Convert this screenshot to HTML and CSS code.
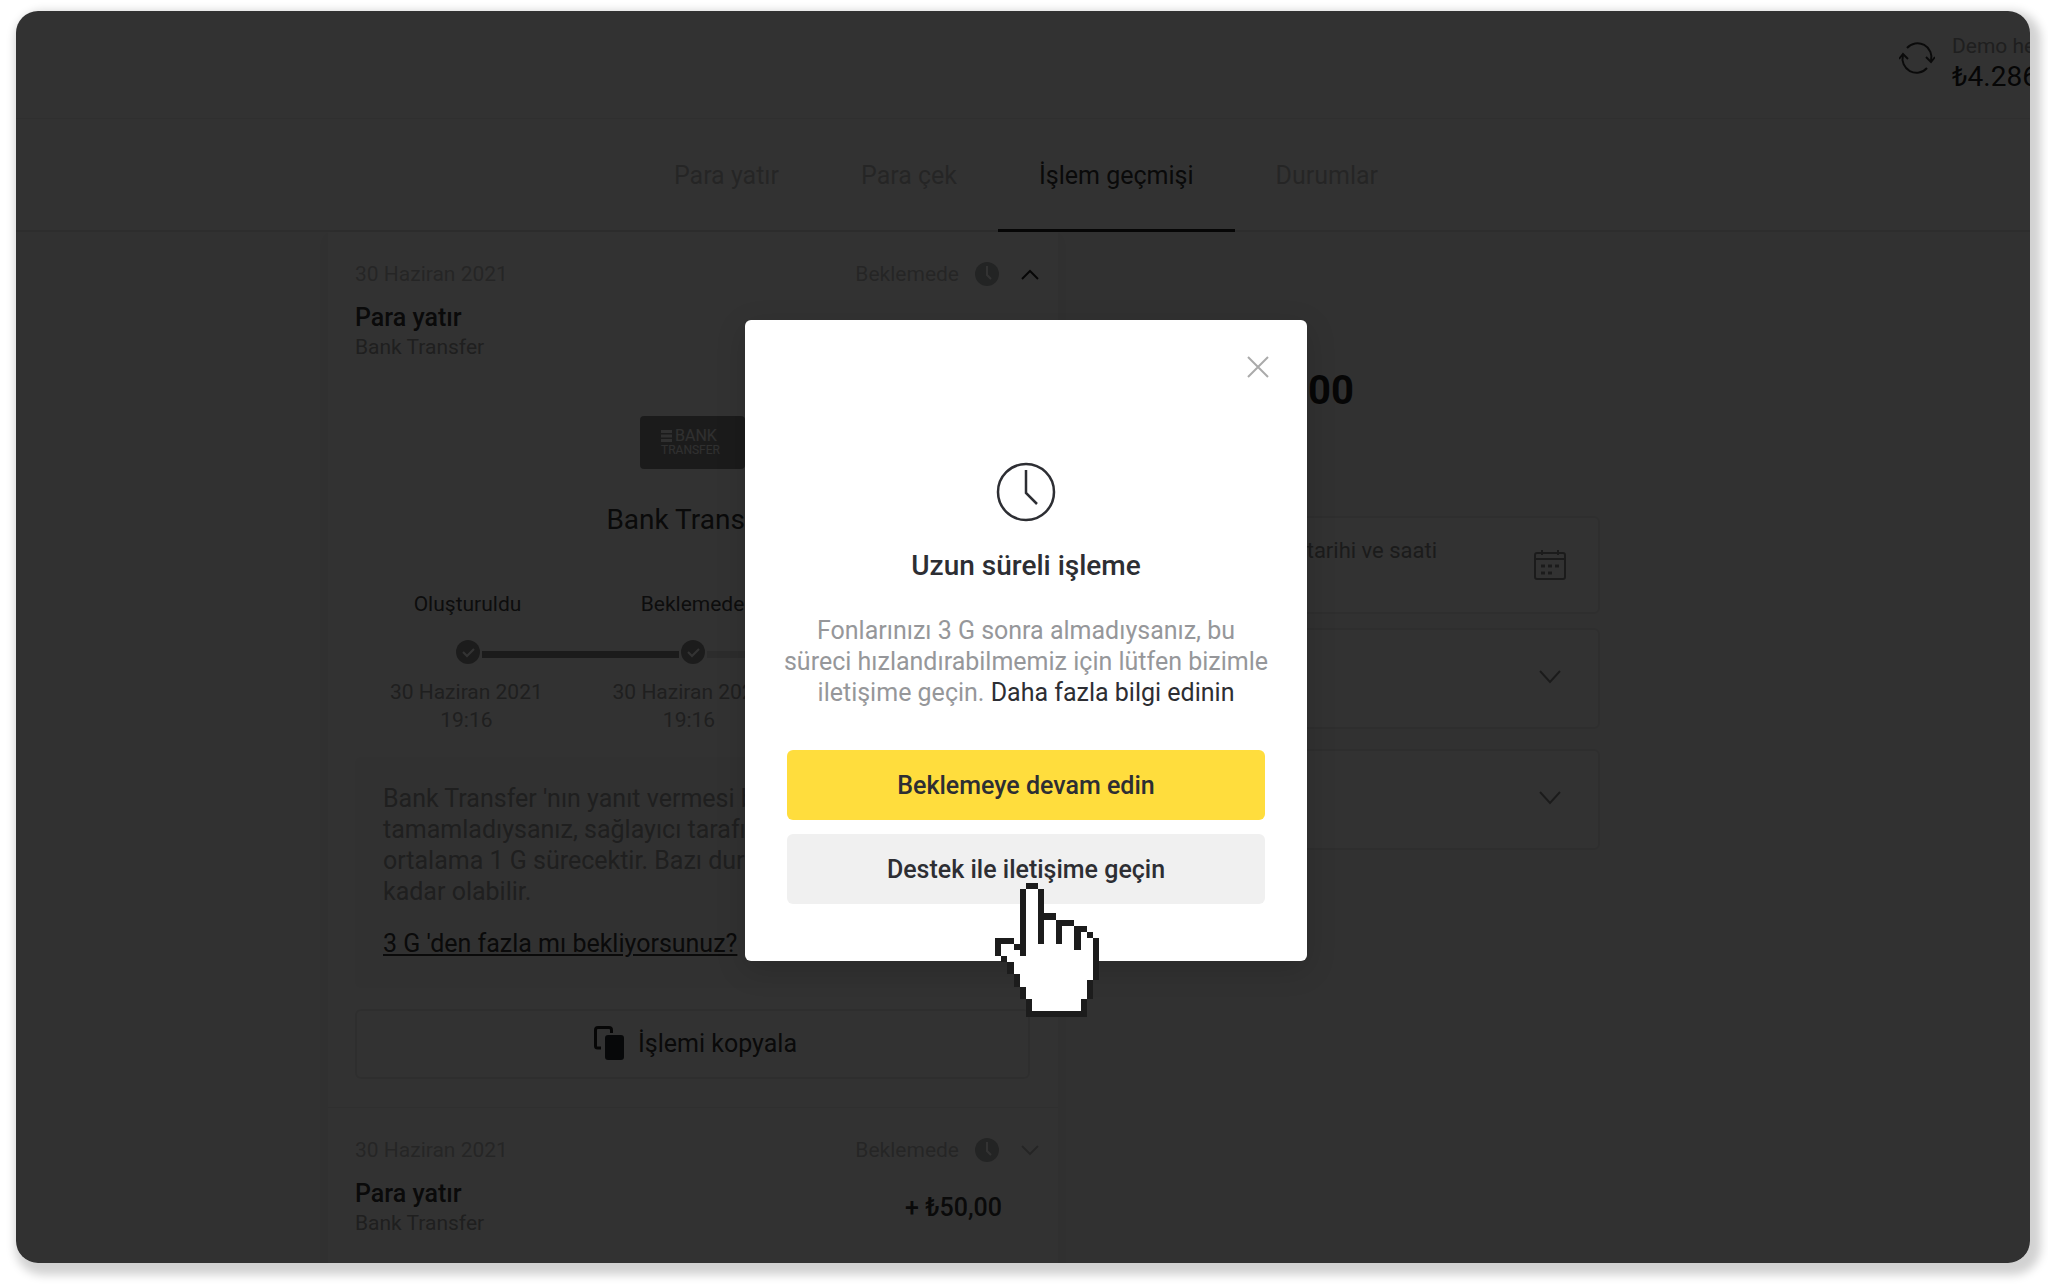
FILE: index.html
```html
<!DOCTYPE html>
<html lang="tr">
<head>
  <meta charset="UTF-8">
  <meta name="viewport" content="width=device-width, initial-scale=1.0">
  <title>İşlem geçmişi</title>
  <link rel="stylesheet" href="styles.css">
</head>
<body>
  <div class="frame">
    <div class="page">
      <header class="header">
        <svg class="refresh" viewBox="0 0 36 36" fill="none" stroke="currentColor" stroke-width="2">
          <path d="M8 8a14 14 0 0 1 24 13M28 28A14 14 0 0 1 4 15"/>
          <path d="M27 17l5 5 4-5M0 19l4-5 5 5"/>
        </svg>
        <div class="account">
          <div class="account-name">Demo hesap</div>
          <div class="account-balance">₺4.286,00</div>
        </div>
      </header>

      <nav class="tabs">
        <a href="#" class="tab">Para yatır</a>
        <a href="#" class="tab">Para çek</a>
        <a href="#" class="tab active">İşlem geçmişi</a>
        <a href="#" class="tab">Durumlar</a>
      </nav>

      <main class="content">
        <section class="history">
          <article class="item">
            <div class="item-top">
              <span class="date">30 Haziran 2021</span>
              <span class="status">Beklemede</span>
              <svg class="status-icon" viewBox="0 0 24 24">
                <circle cx="12" cy="12" r="12" fill="#aeb2b2"/>
                <path d="M12 4v9l4 4" fill="none" stroke="#fff" stroke-width="2"/>
              </svg>
              <svg class="chevron dark" viewBox="0 0 18 24" fill="none" stroke="currentColor" stroke-width="2">
                <path d="M1 17l8-8 8 8"/>
              </svg>
            </div>
            <div class="item-main">
              <div>
                <h3>Para yatır</h3>
                <p class="method">Bank Transfer</p>
              </div>
            </div>

            <div class="details">
              <div class="bank-logo">
                <div class="bank-row">
                  <svg class="bars" viewBox="0 0 12 12" fill="currentColor">
                    <path d="M0 0h11v3H0zM0 4.500h11v3H0zM0 9h11v3H0z"/>
                  </svg>
                  <span class="bank-word">BANK</span>
                </div>
                <span class="transfer-word">TRANSFER</span>
              </div>
              <h2>Bank Transfer</h2>

              <div class="steps step-names">
                <span>Oluşturuldu</span>
                <span>Beklemede</span>
                <span>Tamamlandı</span>
              </div>
              <div class="track">
                <svg class="dot" viewBox="0 0 24 24">
                  <circle cx="12" cy="12" r="12" fill="#8c8c8c"/>
                  <path d="M7 12l4 4 7-7" fill="none" stroke="#fff" stroke-width="2"/>
                </svg>
                <span class="line"></span>
                <svg class="dot" viewBox="0 0 24 24">
                  <circle cx="12" cy="12" r="12" fill="#8c8c8c"/>
                  <path d="M7 12l4 4 7-7" fill="none" stroke="#fff" stroke-width="2"/>
                </svg>
                <span class="line next"></span>
                <svg class="dot" viewBox="0 0 24 24">
                  <circle cx="12" cy="12" r="12" fill="#dcdcdc"/>
                </svg>
              </div>
              <div class="steps step-dates">
                <span>30 Haziran 2021<br>19:16</span>
                <span>30 Haziran 2021<br>19:16</span>
                <span></span>
              </div>

              <div class="info">
                <p>Bank Transfer 'nın yanıt vermesi bekleniyor. İşlemi<br>
                tamamladıysanız, sağlayıcı tarafından işlenmesi<br>
                ortalama 1 G sürecektir. Bazı durumlarda 3 G<br>
                kadar olabilir.</p>
                <a href="#">3 G 'den fazla mı bekliyorsunuz?</a>
              </div>

              <button type="button" class="copy">
                <svg viewBox="0 0 30 34">
                  <path d="M7 22H3.500Q1.500 22 1.500 20V4Q1.500 1.500 4 1.500H15Q17.500 1.500 17.500 4V7" fill="none" stroke="#222" stroke-width="3"/>
                  <rect x="11" y="9" width="19" height="25" rx="3" fill="#262b2e"/>
                </svg>
                İşlemi kopyala
              </button>
            </div>
          </article>

          <article class="item">
            <div class="item-top">
              <span class="date">30 Haziran 2021</span>
              <span class="status">Beklemede</span>
              <svg class="status-icon" viewBox="0 0 24 24">
                <circle cx="12" cy="12" r="12" fill="#aeb2b2"/>
                <path d="M12 4v9l4 4" fill="none" stroke="#fff" stroke-width="2"/>
              </svg>
              <svg class="chevron" viewBox="0 0 18 24" fill="none" stroke="currentColor" stroke-width="2">
                <path d="M1 8l8 8 8-8"/>
              </svg>
            </div>
            <div class="item-main">
              <div>
                <h3>Para yatır</h3>
                <p class="method">Bank Transfer</p>
              </div>
              <span class="amount">+ ₺50,00</span>
            </div>
          </article>
        </section>

        <aside class="filters">
          <div class="total">₺1.050,00</div>
          <div class="field date-field">
            <div class="field-text">
              <label for="date">Son işlem tarihi ve saati</label>
              <input type="text" id="date">
            </div>
            <svg class="calendar" viewBox="0 0 34 30" fill="none" stroke="currentColor" stroke-width="2">
              <rect x="2" y="3" width="30" height="26" rx="2"/>
              <path d="M2 9h30M9 0v5M25 0v5"/>
              <path d="M8 16h4M15 16h4M22 16h4M8 23h4M15 23h4" stroke-width="3"/>
            </svg>
          </div>
          <div class="field">
            <select id="type" aria-label="İşlem türü"><option></option></select>
            <svg class="arrow" viewBox="0 0 22 14" fill="none" stroke="currentColor" stroke-width="2">
              <path d="M1 1l10 11L21 1"/>
            </svg>
          </div>
          <div class="field">
            <select id="state" aria-label="Durum"><option></option></select>
            <svg class="arrow" viewBox="0 0 22 14" fill="none" stroke="currentColor" stroke-width="2">
              <path d="M1 1l10 11L21 1"/>
            </svg>
          </div>
        </aside>
      </main>

      <div class="overlay">
        <div class="modal" role="dialog" aria-labelledby="modal-title">
          <button type="button" class="close" aria-label="Kapat">
            <svg viewBox="0 0 22 22" fill="none" stroke="currentColor" stroke-width="2">
              <path d="M1 1l20 20M21 1L1 21"/>
            </svg>
          </button>
          <svg class="clock" viewBox="0 0 60 60" fill="none" stroke="currentColor">
            <circle cx="30" cy="30" r="28" stroke-width="2.500"/>
            <path d="M30 8v23l11 11" stroke-width="2.500"/>
          </svg>
          <h1 id="modal-title">Uzun süreli işleme</h1>
          <p>Fonlarınızı 3 G sonra almadıysanız, bu süreci hızlandırabilmemiz için lütfen bizimle iletişime geçin. <a href="#">Daha fazla bilgi edinin</a></p>
          <button type="button" class="btn primary">Beklemeye devam edin</button>
          <button type="button" class="btn">Destek ile iletişime geçin</button>

          <svg class="cursor" viewBox="0 0 17 22" shape-rendering="crispEdges">
            <path fill="#fff" d="M5 0H7V1H8V5H10V6H13V7H15V8H16V9H17V16H16V19H15V22H5V19H4V17H3V15H2V13H1V12H0V9H3V10H4V1H5Z"/>
            <path fill="#1c1c1c" d="M5 0h2v1h-2zM4 1h1v11h-1zM7 1h1v9h-1zM8 5h2v1h-2zM10 6h3v1h-3zM10 7h1v3h-1zM13 7h2v1h-2zM13 8h1v3h-1zM15 8h1v1h-1zM16 9h1v7h-1zM15 16h1v3h-1zM14 19h1v3h-1zM5 21h9v1h-9zM5 19h1v2h-1zM4 17h1v2h-1zM3 15h1v2h-1zM2 13h1v2h-1zM1 12h1v1h-1zM0 9h1v3h-1zM1 9h2v1h-2zM3 10h1v1h-1z"/>
          </svg>
        </div>
      </div>
    </div>
  </div>
</body>
</html>
```
FILE: styles.css
```css
* {
  margin: 0;
  padding: 0;
  box-sizing: border-box;
}

body {
  background-color: #fff;
  font-family: Roboto, Arial, sans-serif;
  font-size: 25px;
  line-height: 31px;
  display: flex;
  min-height: 100vh;
  padding: 11px 18px 22px 16px;
}

button, input, select {
  font: inherit;
  border: none;
  background: none;
}

a {
  color: inherit;
}

svg {
  flex: none;
}

.frame {
  flex: 1;
  display: flex;
  min-width: 0;
  border-radius: 22px;
  overflow: hidden;
  box-shadow: 5px 6px 10px 6px rgba(0,0,0,0.18);
}

/* a little wider than the frame, so the balance runs off the right side */
.page {
  position: relative;
  display: flex;
  flex-direction: column;
  flex: none;
  width: calc(100% + 6px);
  background-color: #fafafa;
}

/* header */
.header {
  display: flex;
  justify-content: flex-end;
  align-items: flex-start;
  gap: 17px;
  height: 108px;
  padding-top: 21px;
  border-bottom: 1px solid #eaeaea;
}

.refresh {
  width: 36px;
  height: 36px;
  margin-top: 8px;
  color: #333;
}

.account {
  width: 84px;
  white-space: nowrap;
}

.account-name {
  font-size: 21px;
  line-height: 28px;
  color: #999;
}

.account-balance {
  font-size: 28px;
  line-height: 34px;
  color: #222;
}

/* tabs */
.tabs {
  display: flex;
  justify-content: center;
  border-bottom: 2px solid #e0e0e0;
}

.tab {
  padding: 41px 41px 38px;
  margin-bottom: -2px;
  border-bottom: 3px solid transparent;
  color: #bbb;
  text-decoration: none;
}

.tab.active {
  color: #333;
  border-bottom-color: #222;
}

/* content */
.content {
  flex: 1;
  display: flex;
  gap: 113px;
  width: 1396px;
  margin: 0 auto;
}

.content::before {
  content: "";
  position: absolute;
  left: 0;
  right: 0;
  bottom: 0;
  top: 221px;
  background-color: #f4f4f4;
}

.history {
  position: relative;
  width: 730px;
  background-color: #fafafa;
  box-shadow: 0 6px 14px 4px rgba(0,0,0,0.04);
}

.item {
  padding: 28px 28px 28px 27px;
}

.item + .item {
  padding-bottom: 20px;
  border-top: 1px solid #eaeaea;
}

.item-top {
  display: flex;
  align-items: center;
  margin-right: -9px;
  font-size: 21px;
  line-height: 28px;
  color: #bbb;
}

.status {
  margin-left: auto;
}

.status-icon {
  width: 24px;
  height: 24px;
  margin: 0 22px 0 16px;
}

.chevron {
  width: 18px;
  height: 24px;
}

.chevron.dark {
  color: #222;
}

.item-main {
  display: flex;
  justify-content: space-between;
  align-items: center;
  margin-top: 14px;
}

.item-main h3 {
  font-size: 25px;
  font-weight: 500;
  color: #333;
}

.method {
  font-size: 21px;
  line-height: 28px;
  color: #999;
}

.amount {
  margin-right: 28px;
  font-weight: 500;
  color: #333;
}

.details {
  margin-top: 55px;
}

.bank-logo {
  width: 105px;
  height: 53px;
  margin: 0 auto;
  padding: 12px 0 0 21px;
  border-radius: 4px;
  background-color: #888;
  color: #eee;
}

.bank-row {
  display: flex;
  align-items: center;
  gap: 2px;
  line-height: 16px;
}

.bars {
  width: 12px;
  height: 12px;
}

.bank-word {
  font-size: 16px;
}

.transfer-word {
  display: block;
  font-size: 12px;
  line-height: 12px;
}

.details h2 {
  margin-top: 34px;
  font-size: 28px;
  line-height: 34px;
  font-weight: 400;
  text-align: center;
  color: #333;
}

.steps {
  display: flex;
  font-size: 21px;
  line-height: 28px;
  text-align: center;
}

.steps span {
  flex: 1;
}

.step-names {
  margin-top: 53px;
  color: #444;
}

.track {
  display: flex;
  align-items: center;
  gap: 2px;
  margin-top: 22px;
  padding: 0 101px;
}

.dot {
  width: 24px;
  height: 24px;
}

.line {
  flex: 1;
  height: 7px;
  margin-top: 4px;
  background-color: #888;
}

.line.next {
  background-color: #dcdcdc;
}

.step-dates {
  margin-top: 14px;
  padding-right: 7px;
  color: #999;
}

.info {
  margin-top: 23px;
  padding: 26px 28px 29px;
  border-radius: 6px;
  background-color: #f4f4f4;
  color: #999;
}

.info a {
  display: block;
  margin-top: 21px;
  color: #333;
}

.copy {
  display: flex;
  justify-content: center;
  align-items: center;
  gap: 14px;
  width: 100%;
  height: 70px;
  margin-top: 21px;
  padding: 0 0 2px 6px;
  border: 2px solid #e6e6e6;
  border-radius: 6px;
  color: #333;
}

.copy svg {
  width: 30px;
  height: 34px;
}

/* right column */
.filters {
  position: relative;
  width: 429px;
  padding-top: 135px;
}

.total {
  margin-bottom: 101px;
  font-size: 40px;
  line-height: 48px;
  font-weight: 700;
  color: #222;
}

.field {
  display: flex;
  align-items: center;
  height: 101px;
  margin-bottom: 20px;
  padding: 0 37px 4px 32px;
  border: 2px solid #e6e6e6;
  border-radius: 6px;
  background-color: #f9f9f9;
  color: #888;
}

.date-field {
  height: 98px;
  margin-bottom: 14px;
  padding: 0 31px 0 32px;
}

.field-text {
  flex: 1;
  min-width: 0;
  font-size: 22px;
  line-height: 28px;
}

.field-text label {
  display: block;
}

.field input {
  width: 100px;
  height: 28px;
}

.field select {
  flex: 1;
  height: 48px;
  appearance: none;
}

.calendar {
  width: 34px;
  height: 30px;
}

.arrow {
  width: 22px;
  height: 14px;
}

/* modal */
.overlay {
  position: absolute;
  inset: 0;
  display: flex;
  justify-content: center;
  align-items: center;
  padding-top: 7px;
  background-color: rgba(0,0,0,0.8);
}

.modal {
  position: relative;
  display: flex;
  flex-direction: column;
  align-items: center;
  width: 562px;
  padding: 36px 42px 57px;
  border-radius: 6px;
  background-color: #fff;
  box-shadow: 0 8px 30px rgba(0,0,0,0.15);
  text-align: center;
  color: #2d2e33;
}

.close {
  align-self: flex-end;
  width: 22px;
  height: 22px;
  margin-right: -4px;
  color: #aaa;
  cursor: pointer;
}

.close svg {
  display: block;
}

.clock {
  width: 60px;
  height: 60px;
  margin-top: 84px;
}

.modal h1 {
  margin-top: 27px;
  font-size: 28px;
  line-height: 34px;
  font-weight: 500;
}

.modal p {
  margin: 32px -4px 42px;
  color: #96979a;
}

.modal p a {
  color: #2d2e33;
  text-decoration: none;
}

.btn {
  width: 100%;
  height: 70px;
  border-radius: 6px;
  background-color: #f0f0f0;
  color: #2d2e33;
  font-weight: 500;
  cursor: pointer;
}

.btn.primary {
  margin-bottom: 14px;
  background-color: #ffdd3d;
}

.cursor {
  position: absolute;
  left: 250px;
  top: 563px;
  width: 104px;
  height: 134px;
}
```
